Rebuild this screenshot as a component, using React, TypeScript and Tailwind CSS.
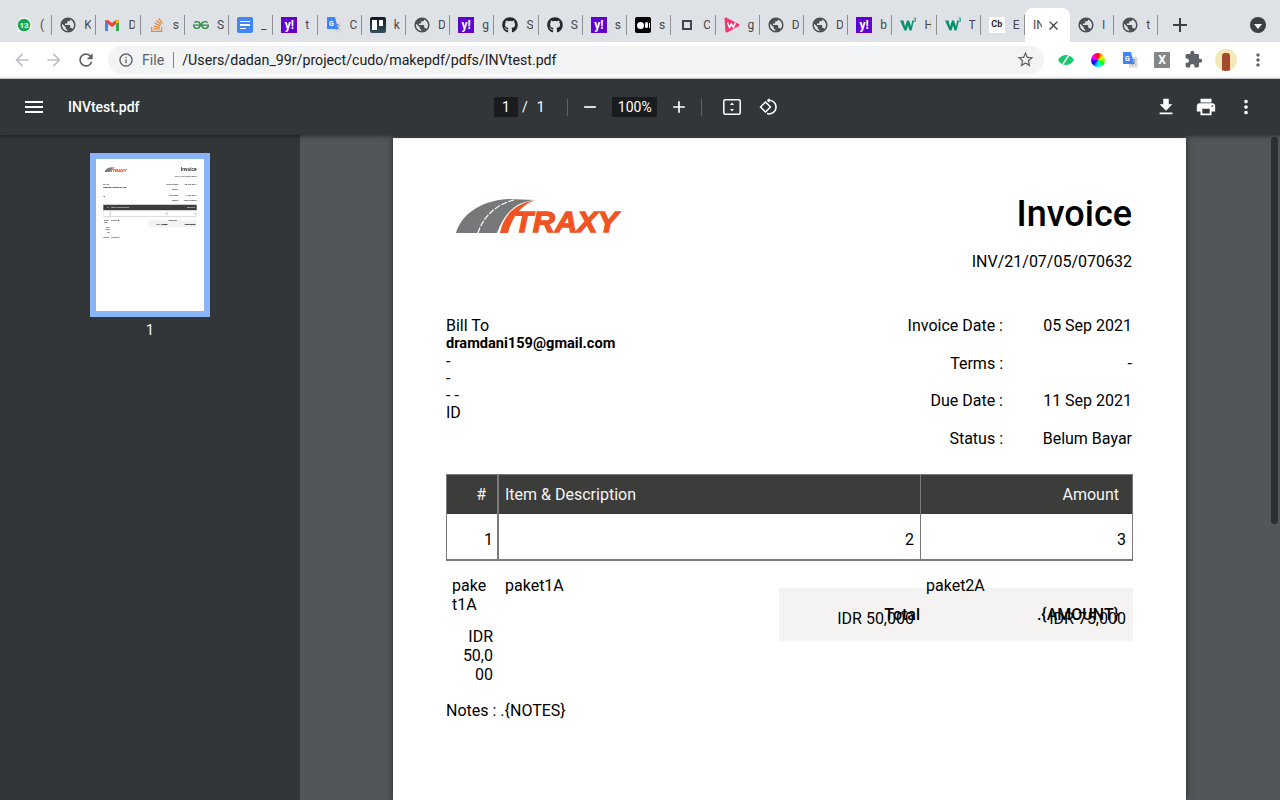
import { ReactNode } from "react";
import { MdPublic, MdMenu, MdFileDownload, MdPrint, MdMoreVert, MdClose, MdAdd, MdRemove, MdRefresh, MdArrowBack, MdArrowForward, MdInfoOutline, MdStarBorder, MdExtension } from "react-icons/md";
import { FaGithub, FaStackOverflow } from "react-icons/fa";
import { SiGeeksforgeeks } from "react-icons/si";

const Globe = () => <MdPublic className="h-[18px] w-[18px] -m-[1px] text-[#4c4f53]" />;

const Yahoo = () => (
    <div className="flex h-4 w-4 items-center justify-center bg-[#6001d2] text-[12px] font-bold leading-none text-white">y!</div>
);

const Gmail = () => (
    <svg viewBox="0 0 16 16" className="h-4 w-4">
        <path d="M1 3.5V14h3V7l4 3 4-3v7h3V3.5L12 3 8 6 4 3z" fill="#ea4335" />
        <path d="M1 4v10h3V7z" fill="#4285f4" />
        <path d="M15 4v10h-3V7z" fill="#34a853" />
        <path d="M12 7V3.2l3 .3V5z" fill="#fbbc04" />
    </svg>
);

const Docs = () => (
    <div className="flex h-4 w-4 flex-col justify-center gap-[2px] rounded-[2px] bg-[#4285f4] px-[3px]">
        <div className="h-[1.5px] bg-white" />
        <div className="h-[1.5px] bg-white" />
        <div className="h-[1.5px] w-[6px] bg-white" />
    </div>
);

const Translate = () => (
    <svg viewBox="0 0 16 16" className="h-4 w-4">
        <path d="M6 5h9.5v10.5H7z" fill="#dadce0" />
        <path d="M9.5 8h4M11.5 7v1M10 13l3-4M10.5 9.5l3 3" stroke="#80868b" strokeWidth="0.9" fill="none" />
        <path d="M1 0h8l3 12H1z" fill="#4285f4" />
        <text x="3" y="8.5" fontSize="7" fontWeight="700" fill="#fff" fontFamily="Roboto, sans-serif">G</text>
    </svg>
);

const Trello = () => (
    <div className="flex h-4 w-4 gap-[1.5px] rounded-[2px] bg-gradient-to-b from-[#0f1b22] to-[#33505f] p-[2.5px]">
        <div className="h-[10px] w-[5px] bg-white" />
        <div className="h-[6px] w-[4px] bg-white" />
    </div>
);

const Medium = () => (
    <div className="flex h-4 w-4 items-center justify-center gap-[1px] rounded-[2px] bg-black">
        <div className="h-[7px] w-[7px] rounded-full bg-white" />
        <div className="h-[6px] w-[3px] rounded-full bg-white" />
        <div className="h-[5px] w-[1px] bg-white" />
    </div>
);

const Wattpad = () => (
    <svg viewBox="0 0 16 16" className="h-4 w-4">
        <path d="M1.500 1.500 14.500 8 2.500 14.500z" fill="#ff2f6c" stroke="#ff2f6c" strokeWidth="2" strokeLinejoin="round" />
        <path d="M3.500 5.500 5.500 10.500 7.500 7 9.500 10.500 11.500 5.500" stroke="#fff" strokeWidth="1.600" fill="none" />
    </svg>
);

const W3 = () => (
    <svg viewBox="0 0 16 16" className="h-4 w-4">
        <path d="M0 3.500h3.500l1.500 6 2-6h2l2 6 1.200-6H14l-2.500 10h-2L8 8.500l-1.500 5h-2z" fill="#04946d" />
        <path d="M13.500 1h2v3.500h-2M14 2.700h1.500" stroke="#04946d" strokeWidth="0.700" fill="none" />
    </svg>
);

const WhatsApp = () => (
    <svg viewBox="0 0 16 16" className="h-4 w-4">
        <circle cx="8" cy="8" r="7.500" fill="#fff" />
        <path d="M1 15l1.500-4.500 2.500 3z" fill="#fff" />
        <circle cx="8" cy="8" r="6.300" fill="#14a84c" />
        <text x="8" y="10.800" textAnchor="middle" fontSize="8" fontWeight="700" fill="#fff" fontFamily="Roboto, sans-serif">13</text>
    </svg>
);

const tabs: { icon: ReactNode; letter: string }[] = [
    { icon: <WhatsApp />, letter: "(" },
    { icon: <Globe />, letter: "K" },
    { icon: <Gmail />, letter: "D" },
    { icon: <FaStackOverflow className="h-4 w-4 text-[#e8883a]" />, letter: "s" },
    { icon: <SiGeeksforgeeks className="h-4 w-4 text-[#2f8d46]" />, letter: "S" },
    { icon: <Docs />, letter: "_" },
    { icon: <Yahoo />, letter: "t" },
    { icon: <Translate />, letter: "C" },
    { icon: <Trello />, letter: "k" },
    { icon: <Globe />, letter: "D" },
    { icon: <Yahoo />, letter: "g" },
    { icon: <FaGithub className="h-4 w-4 text-[#24292e]" />, letter: "S" },
    { icon: <FaGithub className="h-4 w-4 text-[#24292e]" />, letter: "S" },
    { icon: <Yahoo />, letter: "s" },
    { icon: <Medium />, letter: "s" },
    { icon: <div className="h-[10px] w-[10px] border-[2.5px] border-[#3c4650]" />, letter: "C" },
    { icon: <Wattpad />, letter: "g" },
    { icon: <Globe />, letter: "D" },
    { icon: <Globe />, letter: "D" },
    { icon: <Yahoo />, letter: "b" },
    { icon: <W3 />, letter: "H" },
    { icon: <W3 />, letter: "T" },
    { icon: <div className="flex h-4 w-4 items-center justify-center bg-white text-[9px] font-bold text-[#2b2b2b]">Cb</div>, letter: "E" },
];

function Tab({ icon, letter }: { icon: ReactNode; letter: string }) {
    return (
        <div className="flex h-[20px] w-[44.22px] shrink-0 items-center border-r border-[#8b8e93] pl-[8px]">
            <div className="flex h-4 w-4 shrink-0 items-center justify-center">{icon}</div>
            <span className="ml-[8px] w-[7px] overflow-hidden text-[12px] text-[#45484c]">{letter}</span>
        </div>
    );
}

function TabStrip() {
    return (
        <div className="flex h-[42px] items-start bg-[#dee1e6] pl-[8px]">
            <div className="flex pt-[15px]">
                {tabs.map((t, i) => (
                    <Tab key={i} icon={t.icon} letter={t.letter} />
                ))}
            </div>
            {/* Active tab */}
            <div className="mt-[8px] flex h-[34px] w-[45px] shrink-0 items-center rounded-t-[8px] bg-white pl-[8px]">
                <span className="w-[9px] overflow-hidden text-[12px] text-[#45484c]">IN</span>
                <MdClose className="ml-[4px] h-[15px] w-[15px] text-[#3c4043]" />
            </div>
            <div className="flex pt-[15px]">
                <Tab icon={<Globe />} letter="I" />
                <Tab icon={<Globe />} letter="t" />
            </div>
            <MdAdd className="ml-[10px] mt-[13px] h-[24px] w-[24px] text-[#3c4043]" />
            <div className="ml-auto mr-[14px] mt-[17px] flex h-4 w-4 items-center justify-center rounded-full bg-[#3c4043]">
                <div className="mt-[2px] h-0 w-0 border-x-[4px] border-t-[5px] border-x-transparent border-t-white" />
            </div>
        </div>
    );
}

function AddressBar() {
    return (
        <div className="flex h-[37px] items-center border-b border-[#dadce0] bg-white pb-[1px]">
            <MdArrowBack className="ml-[12px] h-[20px] w-[20px] text-[#bdc1c6]" />
            <MdArrowForward className="ml-[12px] h-[20px] w-[20px] text-[#bdc1c6]" />
            <MdRefresh className="ml-[12px] h-[20px] w-[20px] text-[#5f6368]" />
            <div className="ml-[12px] flex h-[28px] w-[936px] items-center rounded-full bg-[#f1f3f4] pl-[10px]">
                <MdInfoOutline className="h-[16px] w-[16px] text-[#5f6368]" />
                <span className="ml-[8px] pt-[2px] text-[14.2px] text-[#5f6368]">File</span>
                <div className="ml-[9px] mr-[8px] h-[16px] w-px bg-[#80868b]" />
                <span className="pt-[2px] text-[14.2px] text-[#202124]">/Users/dadan_99r/project/cudo/makepdf/pdfs/INVtest.pdf</span>
                <MdStarBorder className="ml-auto mr-[9px] h-[19px] w-[19px] text-[#5f6368]" />
            </div>
            {/* Extensions */}
            <svg viewBox="0 0 16 16" className="ml-[14px] h-4 w-4">
                <path d="M0 8c2-3.500 5-5 8-5s6 1.500 8 5c-2 3.500-5 5-8 5s-6-1.500-8-5z" fill="#18c76a" />
                <path d="M5 12 11 3" stroke="#fff" strokeWidth="1.400" />
            </svg>
            <div className="ml-[17px] h-[14px] w-[14px] rounded-full bg-[conic-gradient(#f00,#ff0,#0f0,#0ff,#00f,#f0f,#f00)]" />
            <div className="ml-[17px]"><Translate /></div>
            <div className="ml-[16px] flex h-4 w-4 items-center justify-center rounded-[1px] bg-[#868686] text-[12px] font-bold text-white">X</div>
            <MdExtension className="ml-[14px] h-[19px] w-[19px] text-[#5f6368]" />
            <div className="relative ml-[12px] h-[22px] w-[22px] overflow-hidden rounded-full bg-[#f3e9b8]">
                <div className="absolute left-[7px] top-[4px] h-[18px] w-[8px] rounded-t-[3px] bg-[#a5492a]" />
            </div>
            <MdMoreVert className="ml-[11px] h-[20px] w-[20px] text-[#5f6368]" />
        </div>
    );
}

function Divider() {
    return <div className="h-[17px] w-px bg-[#5f6368]" />;
}

function PdfToolbar() {
    return (
        <div className="relative z-10 flex h-[56px] items-center bg-[#323639] text-white shadow-[0_1px_4px_rgba(0,0,0,0.5)]">
            <MdMenu className="ml-[22px] h-[24px] w-[24px]" />
            <span className="ml-[22px] w-[426px] text-[14px] font-medium">INVtest.pdf</span>
            <div className="flex h-[20px] w-[24px] items-center justify-center bg-[#191b1c] text-[14px]">1</div>
            <span className="ml-[4px] text-[14px]">/</span>
            <span className="ml-[9px] w-[30.5px] text-[14px]">1</span>
            <Divider />
            <MdRemove className="ml-[12px] h-[20px] w-[20px]" />
            <div className="ml-[12px] flex h-[20px] w-[45px] items-center justify-center bg-[#191b1c] text-[14px]">100%</div>
            <MdAdd className="ml-[12px] h-[20px] w-[20px]" />
            <div className="ml-[12px]"><Divider /></div>
            <svg viewBox="0 0 18 16" className="ml-[21px] h-[16px] w-[18px]" fill="none" stroke="#fff" strokeWidth="1.500">
                <rect x="0.800" y="0.800" width="16.400" height="14.400" rx="1.500" />
                <path d="M9 3.500 7 6h4zM9 12.500 7 10h4z" fill="#fff" stroke="none" />
            </svg>
            <svg viewBox="0 0 18 18" className="ml-[18px] h-[18px] w-[18px]" fill="none" stroke="#fff" strokeWidth="1.500">
                <path d="M6.500 4 1.500 9l5 5 5-5z" />
                <path d="M8.500 2.500a6.800 6.800 0 1 1-.5 13" />
                <path d="M10.500 0 8 2.500 10.500 5" fill="#fff" stroke="none" />
            </svg>
            <div className="ml-auto flex items-center gap-[18px] pr-[23px]">
                <MdFileDownload className="h-[22px] w-[22px]" />
                <MdPrint className="h-[22px] w-[22px]" />
                <MdMoreVert className="h-[22px] w-[22px]" />
            </div>
        </div>
    );
}

function TraxyLogo() {
    return (
        <svg viewBox="0 0 170 38" className="h-[38px] w-[170px]">
            <path d="M0 36C5 19 22 4 52 2L79 3C62 5 50 12 41 36z" fill="#777879" />
            <path d="M22 36C26 22 38 8 58 3" stroke="#fff" strokeWidth="1.200" strokeDasharray="6 1.500" fill="none" />
            <path d="M44 36C47 20 58 6 79 3.500C66 7 56 20 52 36z" fill="#f05423" />
            <text x="58" y="35" fontSize="30" fontWeight="900" fontStyle="italic" fill="#f05423" stroke="#f05423" strokeWidth="1.300" fontFamily="'Liberation Sans', sans-serif" textLength="104" lengthAdjust="spacingAndGlyphs">TRAXY</text>
        </svg>
    );
}

function InfoRow({ label, value }: { label: string; value: string }) {
    return (
        <div className="flex h-[37.5px] items-start justify-end">
            <span>{label}</span>
            <span className="w-[129px] text-right">{value}</span>
        </div>
    );
}

function InvoicePage() {
    return (
        <div className="h-[1122px] w-[793px] bg-white pl-[53px] pr-[54px] pt-[57px] text-[16px] leading-[19px] text-black [font-family:Roboto,sans-serif]">
            <div className="flex items-start justify-between">
                <div className="pl-[10px] pt-[2px]"><TraxyLogo /></div>
                <div className="text-right">
                    <div className="pt-[1px] text-[36px] font-medium leading-[36px]">Invoice</div>
                    <div className="mt-[20px]">INV/21/07/05/070632</div>
                </div>
            </div>
            <div className="mt-[45px] flex justify-between">
                <div className="pt-[1px] leading-[17.300px]">
                    <div>Bill To</div>
                    <div className="pt-[1px] text-[14.600px] font-bold">dramdani159@gmail.com</div>
                    <div>-</div>
                    <div>-</div>
                    <div>- -</div>
                    <div>ID</div>
                </div>
                <div className="w-[300px]">
                    <InfoRow label="Invoice Date :" value="05 Sep 2021" />
                    <InfoRow label="Terms :" value="-" />
                    <InfoRow label="Due Date :" value="11 Sep 2021" />
                    <InfoRow label="Status :" value="Belum Bayar" />
                </div>
            </div>
            {/* Table */}
            <div className="mt-[8px] w-[687px] border-x border-b-2 border-t border-[#7a7a7a]">
                <div className="grid h-[39px] grid-cols-[52px_422px_1fr] items-center bg-[#3c3d3a] text-[#f4f4f4]">
                    <div className="flex h-full items-center justify-end border-r-2 border-[#7a7a7a] pr-[11px]">#</div>
                    <div className="flex h-full items-center border-r border-[#7a7a7a] pl-[6px]">Item &amp; Description</div>
                    <div className="flex h-full items-center justify-end pr-[13px]">Amount</div>
                </div>
                <div className="grid h-[45px] grid-cols-[52px_422px_1fr]">
                    <div className="flex items-center justify-end border-r-2 border-[#7a7a7a] pr-[4px] pt-[6px]">1</div>
                    <div className="flex items-center justify-end border-r border-[#7a7a7a] pr-[6px] pt-[6px]">2</div>
                    <div className="flex items-center justify-end pr-[6px] pt-[6px]">3</div>
                </div>
            </div>
            {/* Items, the totals box sits behind the text that runs over it */}
            <div className="relative mt-[15px] grid grid-cols-[53px_421px_1fr]">
                <div className="absolute left-[333px] top-[12px] flex h-[53px] w-[354px] items-start bg-[#f4f3f2] pt-[17px] font-medium">
                    <span className="w-[141px] text-right">Total</span>
                    <span className="ml-auto pr-[14px]">.{"{AMOUNT}"}</span>
                </div>
                <div className="relative pl-[6px] break-words">
                    <div className="w-[38px]">paket1A</div>
                    <div className="ml-[3px] mt-[13px] w-[38px] text-right">IDR 50,000</div>
                </div>
                <div className="relative px-[6px]">
                    <div>paket1A</div>
                    <div className="mt-[14px] text-right">IDR 50,000</div>
                </div>
                <div className="relative px-[6px]">
                    <div>paket2A</div>
                    <div className="mt-[14px] text-right">IDR 75,000</div>
                </div>
            </div>
            <div className="mt-[17px]">Notes : .{"{NOTES}"}</div>
        </div>
    );
}

function Sidebar() {
    return (
        <div className="flex w-[300px] shrink-0 flex-col items-center bg-[#323639] pt-[18px]">
            <div className="h-[164px] w-[120px] overflow-hidden bg-[#8ab4f8] p-[6px]">
                <div className="h-[152px] w-[108px] overflow-hidden bg-white">
                    <div className="origin-top-left scale-[0.1362] blur-[3px]">
                        <InvoicePage />
                    </div>
                </div>
            </div>
            <span className="mt-[4px] text-[14px] leading-[18px] text-white">1</span>
        </div>
    );
}

export default function App() {
    return (
        <div className="flex h-[800px] w-[1280px] flex-col overflow-hidden [font-family:Roboto,sans-serif]">
            <TabStrip />
            <AddressBar />
            <PdfToolbar />
            <div className="flex min-h-0 flex-1">
                <Sidebar />
                <div className="relative flex min-w-0 flex-1 justify-center overflow-hidden bg-[#525659] pt-[3px]">
                    <div className="ml-[-1px] shrink-0 shadow-[0_0_7px_rgba(0,0,0,0.5)]"><InvoicePage /></div>
                    {/* Scrollbar thumb */}
                    <div className="absolute right-[2px] top-[2px] h-[387px] w-[7px] rounded-full bg-[#2c2e30]" />
                </div>
            </div>
        </div>
    );
}
